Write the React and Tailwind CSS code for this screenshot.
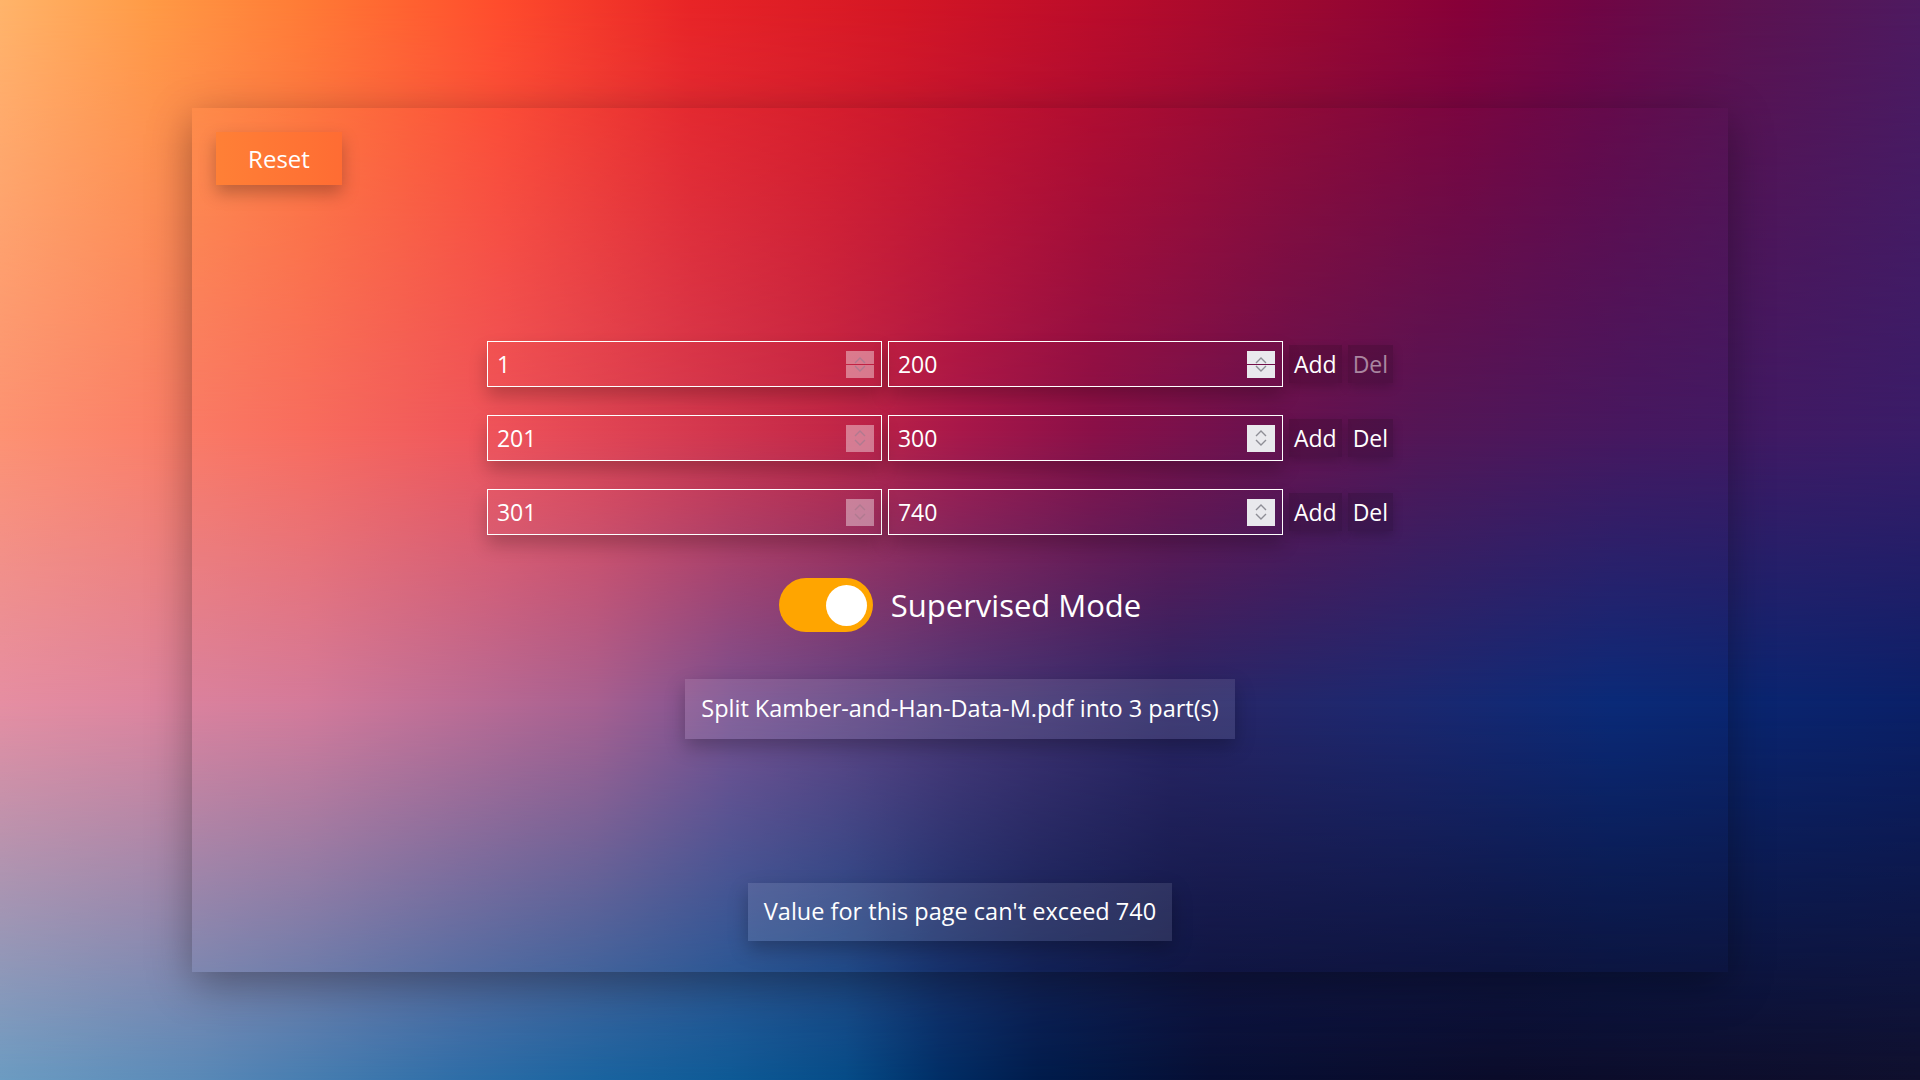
import React, { useState } from 'react';

const FONT = { fontFamily: '"Open Sans", "Noto Sans", sans-serif' };

const initialRanges = [
  { from: 1, to: 200 },
  { from: 201, to: 300 },
  { from: 301, to: 740 },
];

function Spinner({ split, faded }) {
  const tone = faded ? 'bg-white/40' : 'bg-[#e9e9ed]';
  const stroke = faded ? '#b07a90' : '#8e8e96';
  const chevUp = (
    <svg width="12" height="8" viewBox="0 0 12 8"><polyline points="1,7 6,2 11,7" fill="none" stroke={stroke} strokeWidth="1.4" /></svg>
  );
  const chevDown = (
    <svg width="12" height="8" viewBox="0 0 12 8"><polyline points="1,1 6,6 11,1" fill="none" stroke={stroke} strokeWidth="1.4" /></svg>
  );
  if (split) {
    return (
      <div className="flex flex-col w-[28px] h-[27px] gap-[1px] shrink-0">
        <div className={`flex-1 flex items-end justify-center ${tone}`}>{chevUp}</div>
        <div className={`flex-1 flex items-start justify-center ${tone}`}>{chevDown}</div>
      </div>
    );
  }
  return (
    <div className={`flex flex-col items-center justify-center w-[28px] h-[27px] gap-[2px] shrink-0 ${tone}`}>
      {chevUp}
      {chevDown}
    </div>
  );
}

function NumberBox({ value, faded, split, onChange }) {
  return (
    <div className="flex items-center w-[395px] h-[46px] border border-white pl-[9px] pr-[7px] shadow-[0_10px_18px_rgba(0,0,0,0.22)]">
      <input
        type="text"
        value={value}
        readOnly={faded}
        onChange={(e) => onChange && onChange(e.target.value)}
        className="flex-1 min-w-0 bg-transparent outline-none text-white text-[23px] font-medium"
        style={FONT}
      />
      <Spinner split={split} faded={faded} />
    </div>
  );
}

export default function App() {
  const [ranges, setRanges] = useState(initialRanges);
  const [supervised, setSupervised] = useState(true);

  const addRow = (i) => {
    const next = [...ranges];
    next.splice(i + 1, 0, { from: ranges[i].to + 1, to: ranges[i].to + 1 });
    setRanges(next);
  };

  const delRow = (i) => {
    if (i === 0) return;
    setRanges(ranges.filter((_, idx) => idx !== i));
  };

  return (
    <div
      className="relative w-full h-screen overflow-hidden bg-[linear-gradient(to_right,#6c9cc2_0%,#5a8ab8_10%,#2e6ea8_24%,#1a64a0_31%,#0e5a96_38%,#064c88_44%,#002e66_49%,#001c4c_54%,#070f34_63%,#0b0c2a_78%,#10102e_100%)] before:absolute before:inset-0 before:bg-[linear-gradient(to_right,#e68ea2_0%,#d47a9a_16%,#a86090_31%,#7a5090_38%,#4a3878_50%,#2a2666_61%,#1c2870_73%,#0a2a78_84%,#0a2068_100%)] before:[mask-image:linear-gradient(to_bottom,black_65%,transparent_100%)] after:absolute after:inset-0 after:bg-[linear-gradient(to_right,#fd9272_0%,#f86c5e_16%,#ee525a_26%,#c42848_43%,#a8184a_50%,#8a1048_57%,#661250_67%,#541656_74%,#461860_85%,#3a1c68_100%)] after:[mask-image:linear-gradient(to_bottom,black_40%,transparent_65%)]"
      style={FONT}
    >
      <div className="relative z-10 w-full h-full flex items-center justify-center before:absolute before:inset-0 before:bg-[linear-gradient(to_right,#ffb46a_0%,#ff9a45_8%,#ff7a35_16%,#ff4c2c_26%,#e82426_36%,#d41624_47%,#bc0c2a_57%,#9c0830_68%,#880038_76%,#700544_83%,#5c1250_91%,#4e1a60_100%)] before:[mask-image:linear-gradient(to_bottom,black_0%,transparent_40%)]">
        <div className="relative w-[1536px] h-[864px] flex flex-col shadow-[0_12px_40px_rgba(0,0,0,0.35)]">
          <div className="pl-[24px] pt-[24px]">
            <button
              onClick={() => setRanges(initialRanges)}
              className="w-[126px] h-[53px] bg-[linear-gradient(to_right,#ff8036,#ff6c33)] text-white text-[24px] font-medium shadow-[0_8px_16px_rgba(0,0,0,0.25)]"
            >
              Reset
            </button>
          </div>

          <div className="mt-[156px] flex flex-col gap-[28px] pr-[40px]">
            {ranges.map((r, i) => (
              <div key={i} className="flex items-center justify-center gap-[6px]">
                <NumberBox value={r.from} faded split={i === 0} />
                <NumberBox
                  value={r.to}
                  split={i === 0}
                  onChange={(v) => {
                    const next = [...ranges];
                    next[i] = { ...next[i], to: Number(v) || 0 };
                    setRanges(next);
                  }}
                />
                <button
                  onClick={() => addRow(i)}
                  className="h-[38px] px-[5px] bg-black/15 text-white text-[23px] font-medium shadow-[0_4px_10px_rgba(0,0,0,0.18)]"
                >
                  Add
                </button>
                <button
                  onClick={() => delRow(i)}
                  className={`h-[38px] px-[5px] bg-black/15 text-[23px] font-medium shadow-[0_4px_10px_rgba(0,0,0,0.18)] ${i === 0 ? 'text-white/50' : 'text-white'}`}
                >
                  Del
                </button>
              </div>
            ))}
          </div>

          <div className="mt-[43px] flex items-center justify-center gap-[18px]">
            <button
              onClick={() => setSupervised(!supervised)}
              className={`w-[94px] h-[54px] rounded-full flex items-center px-[6px] ${supervised ? 'bg-[#ffa500] justify-end' : 'bg-gray-400 justify-start'}`}
            >
              <span className="w-[41px] h-[41px] rounded-full bg-white" />
            </button>
            <span className="text-white text-[31px] font-medium">Supervised Mode</span>
          </div>

          <div className="mt-[47px] flex justify-center">
            <div className="h-[60px] px-[16px] flex items-center bg-white/10 text-white text-[23.5px] font-medium shadow-[0_8px_18px_rgba(0,0,0,0.25)]">
              Split Kamber-and-Han-Data-M.pdf into {ranges.length} part(s)
            </div>
          </div>

          <div className="mt-[144px] flex justify-center">
            <div className="h-[58px] px-[16px] flex items-center bg-white/10 text-white text-[23.5px] font-medium shadow-[0_8px_18px_rgba(0,0,0,0.25)]">
              Value for this page can't exceed 740
            </div>
          </div>
        </div>
      </div>
    </div>
  );
}
